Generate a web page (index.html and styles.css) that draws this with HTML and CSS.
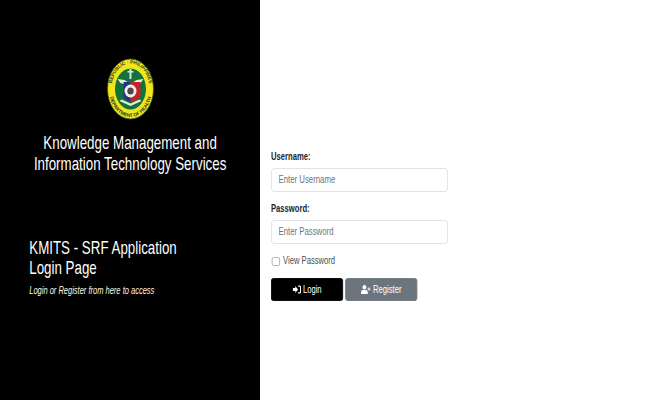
FILE: index.html
```html
<!DOCTYPE html>
<html lang="en">
<head>
  <meta charset="UTF-8">
  <title>KMITS - SRF Application</title>
  <link rel="stylesheet" href="styles.css">
</head>
<body>
  <div class="layout">
    <div class="side">
      <div class="side-inner">
        <svg class="seal" width="64" height="62" viewBox="0 0 48 62" preserveAspectRatio="none">
          <ellipse cx="24" cy="31" rx="23" ry="30" fill="#f2e51c"/>
          <ellipse cx="24" cy="31" rx="23" ry="30" fill="none" stroke="#2c5a22" stroke-width="0.8"/>
          <ellipse cx="24" cy="31" rx="15.5" ry="20.5" fill="#12733a"/>
          <path d="M23 11 h2 v10 h-2 Z M21 13 h6 v1.500 h-6 Z" fill="#dfe3d4"/>
          <path d="M11 21 L18 22 L21 24 L21 27 L17 26 L14 25 Z M37 21 L30 22 L27 24 L27 27 L31 26 L34 25 Z" fill="#e8ecdc"/>
          <path d="M17 24 H24 V44 Q19 43 17 38 Z" fill="#24318f"/>
          <path d="M24 24 H34 V38 Q31 43 24 44 Z" fill="#c8202c"/>
          <ellipse cx="24" cy="33" rx="6" ry="6.500" fill="#f0f0e8"/>
          <ellipse cx="24" cy="33" rx="3.200" ry="3.500" fill="#4a4a4a"/>
          <path d="M13 43 L24 48 L35 43 L33 41.500 L24 45.500 L15 41.500 Z" fill="#e8ecdc"/>
          <path id="sealTop" d="M5 31 A19 25.500 0 0 1 43 31" fill="none"/>
          <path id="sealBottom" d="M2.500 31 A21.500 28 0 0 0 45.500 31" fill="none"/>
          <text class="seal-text"><textPath href="#sealTop" startOffset="50%" text-anchor="middle">REPUBLIC · PHILIPPINES</textPath></text>
          <text class="seal-text"><textPath href="#sealBottom" startOffset="50%" text-anchor="middle">DEPARTMENT OF HEALTH</textPath></text>
        </svg>
        <h1 class="org">Knowledge Management and<br>Information Technology Services</h1>
        <h2 class="app">KMITS - SRF Application<br>Login Page</h2>
        <p class="hint">Login or Register from here to access</p>
      </div>
    </div>
    <div class="main">
      <form class="login-form">
        <label class="field-label" for="username">Username:</label>
        <input class="field" type="text" id="username" placeholder="Enter Username">
        <label class="field-label" for="password">Password:</label>
        <input class="field" type="password" id="password" placeholder="Enter Password">
        <label class="check-row"><input class="check" type="checkbox"> View Password</label>
        <div class="buttons">
          <button class="btn btn-login" type="button">
            <svg class="icon" width="11" height="9" viewBox="0 0 10 9" preserveAspectRatio="none"><path d="M0 3h3V1l3.500 3.500L3 8V6H0Z M6.500 0.500H8.500Q10 0.500 10 2V7Q10 8.500 8.500 8.500H6.500V7.200H8.300Q8.800 7.200 8.800 6.700V2.300Q8.800 1.800 8.300 1.800H6.500Z" fill="#fff"/></svg>
            Login
          </button>
          <button class="btn btn-register" type="button">
            <svg class="icon" width="13" height="9" viewBox="0 0 12 9" preserveAspectRatio="none"><circle cx="4.200" cy="2.300" r="2.300" fill="#fff"/><path d="M0 9V7.400Q0 5 2.400 5H6Q8.400 5 8.400 7.400V9Z" fill="#fff"/><path d="M9.300 2.200h1v1.300h1.400v1h-1.400v1.300h-1V4.500H8V3.500h1.300Z" fill="#fff"/></svg>
            Register
          </button>
        </div>
      </form>
    </div>
  </div>
</body>
</html>
```

FILE: styles.css
```css
body {
  margin: 0;
  font-family: "Liberation Sans", Arial, sans-serif;
  background-color: #fff;
}

.layout {
  display: flex;
  width: 650px;
  height: 400px;
  overflow: hidden;
}

.side {
  width: 260px;
  flex-shrink: 0;
  background-color: #000;
  color: #fff;
}

/* the page content is squeezed sideways to 75% */
.side-inner,
.login-form {
  transform: scaleX(0.75);
  transform-origin: left top;
}

.side-inner {
  width: 347px;
  padding-top: 58px;
  display: flex;
  flex-direction: column;
}

.seal {
  display: block;
  align-self: center;
}

.seal-text {
  font-size: 4.8px;
  font-weight: bold;
  fill: #17351c;
}

.org {
  margin: 13px 0 0;
  font-size: 17.8px;
  font-weight: normal;
  line-height: 21px;
  text-align: center;
}

.app {
  margin: 63px 0 0 39px;
  font-size: 17.8px;
  font-weight: normal;
  line-height: 20px;
}

.hint {
  margin: 7px 0 0 39px;
  font-size: 10px;
  font-style: italic;
  color: #fff8e1;
}

.main {
  flex: 1;
  display: flex;
  padding-left: 11px;
}

.login-form {
  width: 236px;
  padding-top: 151px;
  display: flex;
  flex-direction: column;
}

.field-label {
  font-size: 10.2px;
  font-weight: bold;
  line-height: 12px;
  color: #212529;
  margin-bottom: 5px;
}

.field {
  box-sizing: border-box;
  height: 24px;
  padding: 0 9px 2px;
  margin-bottom: 11px;
  font-family: inherit;
  font-size: 10.4px;
  border: 1px solid #dcdfe3;
  border-radius: 4px;
}

.field::placeholder {
  color: #6c757d;
}

.check-row {
  display: flex;
  align-items: center;
  gap: 4px;
  margin-top: 1px;
  font-size: 10.2px;
  line-height: 10px;
  color: #495057;
}

.check {
  appearance: none;
  box-sizing: border-box;
  width: 11px;
  height: 9px;
  margin: 0 0 0 1px;
  background-color: #fff;
  border: 1px solid #a9aeb3;
  border-radius: 2px;
}

.buttons {
  display: flex;
  gap: 3px;
  margin-top: 12px;
}

.btn {
  width: 96px;
  height: 23px;
  display: flex;
  align-items: center;
  justify-content: center;
  gap: 3px;
  padding: 0;
  font-family: inherit;
  font-size: 10.2px;
  color: #fff;
  border: 1px solid #000;
  border-radius: 3px;
}

.btn-login {
  background-color: #000;
}

.btn-register {
  background-color: #6c757d;
  border-color: #6c757d;
}
```
